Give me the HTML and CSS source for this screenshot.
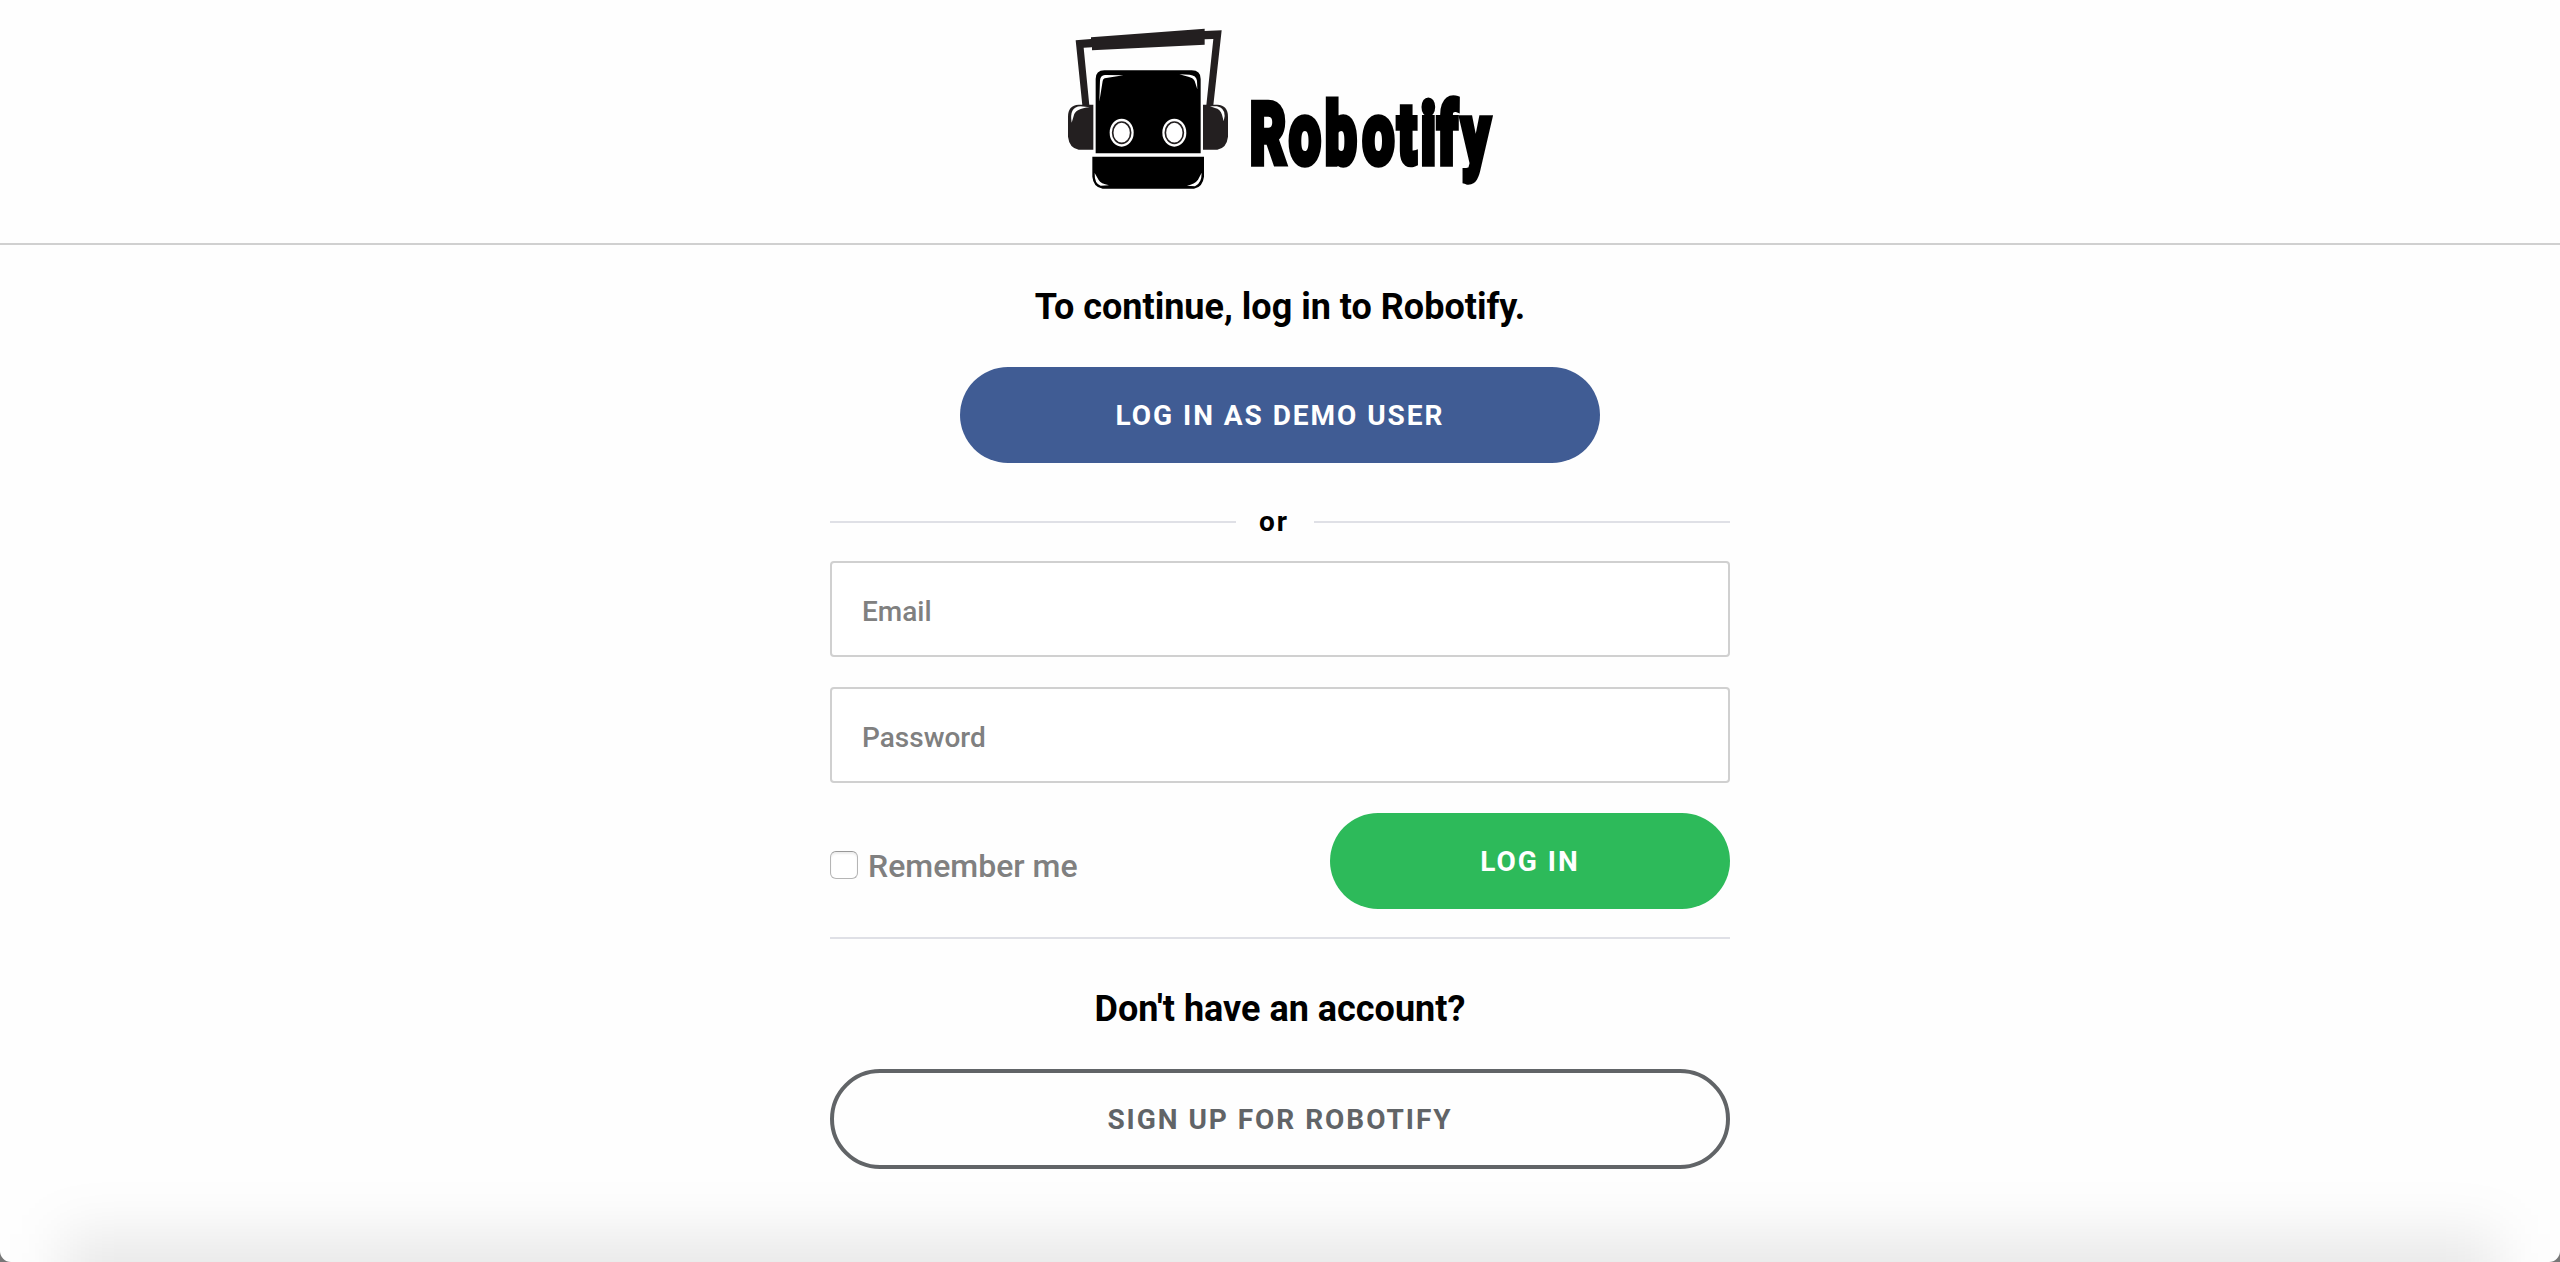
FILE: index.html
```html
<!DOCTYPE html>
<html lang="en">
<head>
<meta charset="utf-8">
<title>Login - Robotify</title>
<link rel="stylesheet" href="styles.css">
</head>
<body>
<div class="page">
  <header class="header">
    <svg class="logo" viewBox="0 0 460 200" role="img" aria-label="Robotify">
      <g transform="scale(.33333)">
        <g fill="#231f20">
          <path d="M77 91L123 87V82L464 56V63L515 61L490 286H469L490 87L464 88V104L126 121V112L101 113L118 286H97Z"/>
          <path d="M130 284H86Q54 286 54 320V380Q58 414 86 419H130ZM459 284H502Q534 286 534 320V380Q530 414 502 419H459Z"/>
        </g>
        <path d="M137 430V207Q137 181 163 181H425Q452 181 452 207V430ZM127 440H462V500Q458 532 432 536H158Q130 532 127 500Z"/>
        <g fill="#fff">
          <path d="M148 275L150 211Q151 196 165 195L220 196L164 205Q159 207 158 213ZM388 193L419 194Q439 196 441 212L442 238L434 213Q429 203 415 200ZM65 338Q57 290 92 289L119 292Q76 295 71 318ZM480 289H501Q525 294 524 318L521 334L516 314Q511 297 495 294ZM134 489L146 510Q152 521 177 526L152 527Q133 521 134 489ZM455 488L444 509Q434 523 411 527L435 529Q455 520 455 488Z"/>
          <ellipse cx="215" cy="368" rx="36" ry="42"/><ellipse cx="373" cy="368" rx="36" ry="42"/>
        </g>
        <g fill="#fff" stroke="#231f20" stroke-width="5">
          <ellipse cx="215" cy="368" rx="27" ry="32"/><ellipse cx="373" cy="368" rx="27" ry="32"/>
        </g>
      </g>
      <text class="wordmark" transform="translate(200 153) scale(.66 1)" x="0 59.5 114 171 224 259 284 321" y="0">Robotify</text>
    </svg>
  </header>
  <main class="login">
    <h1 class="title">To continue, log in to Robotify.</h1>
    <button class="button demo">LOG IN AS DEMO USER</button>
    <div class="divider"><span>or</span></div>
    <form class="form">
      <input class="field" type="email" placeholder="Email">
      <input class="field" type="password" placeholder="Password">
      <div class="actions">
        <label class="remember"><input class="check" type="checkbox"><span>Remember me</span></label>
        <button class="button submit" type="button">LOG IN</button>
      </div>
    </form>
    <h2 class="title account">Don't have an account?</h2>
    <button class="button signup">SIGN UP FOR ROBOTIFY</button>
  </main>
  <div class="shade"></div>
</div>
</body>
</html>
```
FILE: styles.css
```css
* { box-sizing: border-box; }
html { background: #777; }
body { margin: 0; font-family: Roboto, sans-serif; color: #000; }
.page {
  position: relative;
  height: 1262px;
  overflow: hidden;
  background: #fefefe;
  border-radius: 0 0 11px 11px;
}
.header {
  display: flex;
  justify-content: center;
  height: 245px;
  padding-top: 10px;
  border-bottom: 2px solid #d0d0d0;
}
.logo { width: 460px; height: 200px; overflow: visible; }
.wordmark {
  font: 700 84px Roboto, sans-serif;
  stroke: #000;
  stroke-width: 7.5px;
  stroke-linejoin: miter;
  stroke-miterlimit: 2;
}
.login {
  display: flex;
  flex-direction: column;
  align-items: center;
  width: 900px;
  margin: 0 auto;
  padding-top: 41px;
}
.title { margin: 0 0 39px; font-size: 36px; font-weight: 700; line-height: 42px; }
.button {
  height: 96px;
  padding: 2px 0 0;
  border: 0;
  border-radius: 50px;
  color: #fff;
  font: 700 28px/34px Roboto, sans-serif;
  letter-spacing: 1.96px;
}
.demo { width: 640px; background: #405c94; }
.divider {
  display: flex;
  align-items: center;
  width: 100%;
  height: 34px;
  margin: 42px 0 22px;
  font-size: 28px;
  font-weight: 700;
  letter-spacing: 1.96px;
}
.divider::before, .divider::after { content: ""; height: 2px; background: #dfe0e6; }
.divider::before { width: 406px; }
.divider::after { width: 416px; }
.divider span { width: 78px; padding: 0 2px 2px 0; text-align: center; }
.form { width: 100%; border-bottom: 2px solid #dfe0e6; padding-bottom: 28px; }
.field {
  display: block;
  width: 100%;
  height: 96px;
  margin-bottom: 30px;
  padding: 5px 30px 0;
  border: 2px solid #d0d0d0;
  border-radius: 4px;
  background: #fff;
  font: 500 28px Roboto, sans-serif;
}
.field::placeholder { color: #808080; opacity: 1; }
.actions { display: flex; justify-content: space-between; }
.remember {
  display: flex;
  align-items: center;
  gap: 10px;
  padding-top: 8px;
  color: #808080;
  font-size: 32px;
  font-weight: 500;
}
.remember span { padding-top: 2px; }
.check {
  appearance: none;
  width: 28px;
  height: 28px;
  margin: 0;
  border: 1px solid #b5b5b5;
  border-top-color: #999;
  border-radius: 6px;
  background: #fff;
  box-shadow: inset 0 2px 2px #eee;
}
.submit { width: 400px; background: #2dba5a; }
.account { margin-top: 49px; }
.signup {
  width: 100%;
  height: 100px;
  border: 4px solid #616467;
  background: #fefefe;
  color: #616467;
}
.shade {
  position: absolute;
  top: 1234px;
  left: 62px;
  right: 62px;
  height: 200px;
  background: rgba(0, 0, 0, .085);
  filter: blur(28px);
  pointer-events: none;
}
```
